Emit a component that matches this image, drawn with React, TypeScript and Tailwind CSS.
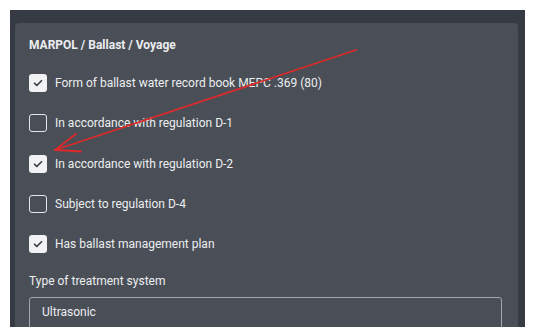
import React from "react";

const rows: { label: string; checked: boolean }[] = [
  { label: "Form of ballast water record book MEPC .369 (80)", checked: true },
  { label: "In accordance with regulation D-1", checked: false },
  { label: "In accordance with regulation D-2", checked: true },
  { label: "Subject to regulation D-4", checked: false },
  { label: "Has ballast management plan", checked: true },
];

function Box({ checked }: { checked: boolean }) {
  if (checked) {
    return (
      <div className="w-[18px] h-[18px] rounded-[3px] bg-[#f1f2f3] flex items-center justify-center shrink-0">
        <svg width="12" height="12" viewBox="0 0 24 24" fill="none" stroke="#3b4048" strokeWidth="3.4" strokeLinecap="round" strokeLinejoin="round">
          <path d="M5 12.5l4.5 4.5L19 7.5" />
        </svg>
      </div>
    );
  }
  return <div className="w-[18px] h-[18px] rounded-[3px] border-[1.5px] border-[#e4e6e8] shrink-0" />;
}

export default function App() {
  return (
    <div
      className="bg-white w-[535px] h-[327px] pl-[10px] pt-[10px] pr-[10px] overflow-hidden"
      style={{ fontFamily: "Roboto, 'Noto Sans', sans-serif" }}
    >
      <div className="bg-[#363a42] h-[317px] pl-[5px] pr-[7px] pt-[13px]">
        <div className="bg-[#4a4f57] rounded-t-[4px] h-full pl-[14px] pr-[16px] pt-[14px] relative text-[#eceef0]">
          <div className="text-[12px] leading-[16px] font-bold">MARPOL / Ballast / Voyage</div>
          <div className="mt-[10px] flex flex-col">
            {rows.map((r) => (
              <div key={r.label} className="h-[40.3px] flex items-center gap-[8px]">
                <Box checked={r.checked} />
                <span className="text-[12px] leading-[16px]">{r.label}</span>
              </div>
            ))}
          </div>
          <div className="mt-[9px] text-[12px] leading-[16px]">Type of treatment system</div>
          <div className="mt-[8px] h-[40px] border border-[#a3a7ad] rounded-[3px] px-[12px] pt-[6px] text-[12px] leading-[16px]">
            Ultrasonic
          </div>
          <svg className="absolute left-0 top-0 pointer-events-none" width="520" height="300" viewBox="0 0 520 300">
            <g stroke="#dc2a2a" strokeWidth="1.8" fill="none" strokeLinecap="round">
              <line x1={341} y1={27} x2={40} y2={127} />
              <line x1={40} y1={127} x2={61} y2={111} />
              <line x1={40} y1={127} x2={66} y2={128.5} />
            </g>
          </svg>
        </div>
      </div>
    </div>
  );
}
